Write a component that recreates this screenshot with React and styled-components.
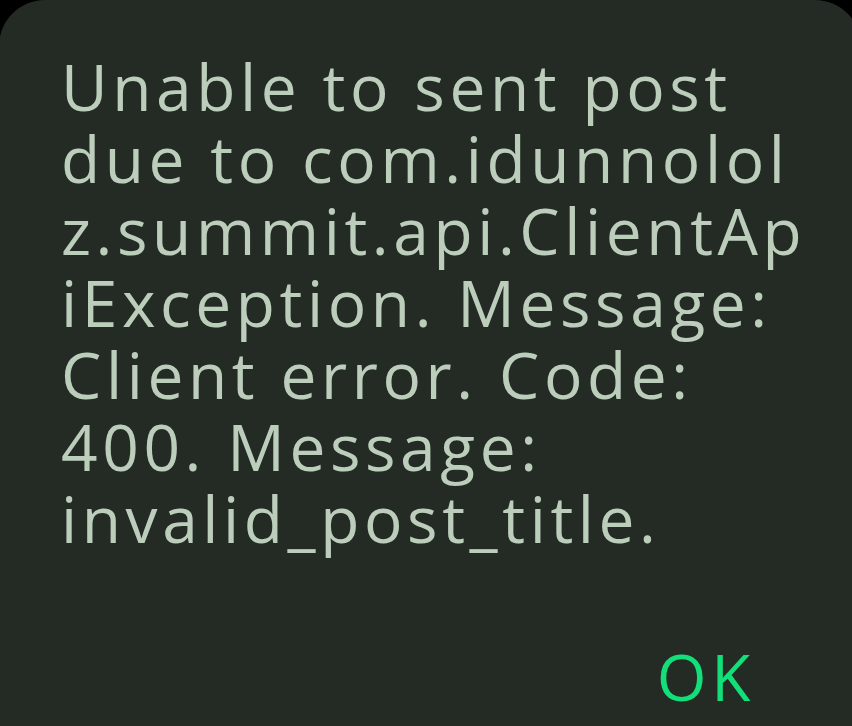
import React from 'react';
import styled, { createGlobalStyle } from 'styled-components';

const GlobalStyle = createGlobalStyle`
  html, body {
    margin: 0;
    height: 100%;
    background: #000;
    overflow: hidden;
  }
  #root {
    height: 100%;
  }
`;

const Dialog = styled.div`
  display: flex;
  flex-direction: column;
  width: calc(100% + 10px);
  height: 100%;
  margin-left: -1px;
  padding: 51px 0 0 62px;
  box-sizing: border-box;
  background: #232b24;
  border-radius: 46px 46px 0 0;
  font-family: "Open Sans", "Noto Sans", sans-serif;
  font-size: 64px;
  line-height: 72px;
  letter-spacing: 4.6px;
`;

const Message = styled.p`
  margin: 0;
  color: #bccdbc;
  font-weight: 400;
`;

const ButtonRow = styled.div`
  display: flex;
  justify-content: flex-end;
  margin-top: 86px;
  padding-right: 106px;
`;

const TextButton = styled.button`
  padding: 0;
  border: none;
  background: none;
  font: inherit;
  letter-spacing: inherit;
  color: ${props => props.color || '#12df79'};
  cursor: pointer;
`;

const lines = [
  'Unable to sent post',
  'due to com.idunnolol',
  'z.summit.api.ClientAp',
  'iException. Message:',
  'Client error. Code:',
  '400. Message:',
  'invalid_post_title.'
];

function ErrorDialog() {
  return (
    <Dialog>
      <Message>
        {lines.map((line, i) => (
          <React.Fragment key={i}>
            {line}
            {i < lines.length - 1 && <br />}
          </React.Fragment>
        ))}
      </Message>
      <ButtonRow>
        <TextButton>OK</TextButton>
      </ButtonRow>
    </Dialog>
  );
}

export default function App() {
  return (
    <>
      <GlobalStyle />
      <ErrorDialog />
    </>
  );
}
